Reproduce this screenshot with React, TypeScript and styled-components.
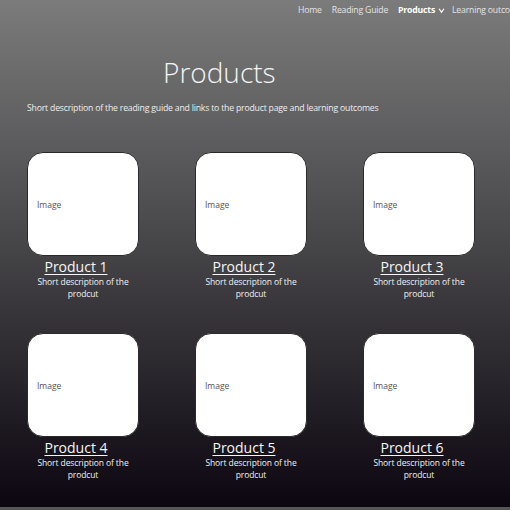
import React from 'react';
import styled, { createGlobalStyle } from 'styled-components';

const products = [1, 2, 3, 4, 5, 6].map((n) => ({
  id: n,
  name: `Product ${n}`,
  description: 'Short description of the prodcut',
}));

//
// MAIN COMPONENT
//
const App = () => {
  return (
    <>
      <GlobalStyle />
      <Page>
        <Header>
          <NavLink>Home</NavLink>
          <NavLink>Reading Guide</NavLink>
          <NavLink $active>
            Products
            <Chevron viewBox="0 0 10 10">
              <path d="M1.5 2.5 L5 7.5 L8.5 2.5" />
            </Chevron>
          </NavLink>
          <NavLink>Learning outcomes</NavLink>
        </Header>
        <Intro>
          <Title>Products</Title>
          <Lead>
            Short description of the reading guide and links to the product page and learning outcomes
          </Lead>
        </Intro>
        <ProductGrid>
          {products.map((product) => (
            <Card key={product.id}>
              <ImageBox>Image</ImageBox>
              <CardTitle>{product.name}</CardTitle>
              <CardText>{product.description}</CardText>
            </Card>
          ))}
        </ProductGrid>
      </Page>
      <Footer />
    </>
  );
};

export default App;

//
// STYLED COMPONENT
//
const GlobalStyle = createGlobalStyle`
  html, body {
    margin: 0;
    padding: 0;
    background: #4a4a4a;
    overflow: hidden;
  }
  body {
    font-family: "Open Sans", "Noto Sans", sans-serif;
    color: #f2f2f2;
  }
`;

const Page = styled.div`
  height: 507px;
  overflow: hidden;
  background: linear-gradient(180deg, #7b7b7b 0%, #444346 50%, #0c0610 100%);
`;

const Footer = styled.div`
  height: 3px;
  background: #555;
`;

const Header = styled.nav`
  display: flex;
  align-items: flex-start;
  gap: 10px;
  padding: 4px 0 0 298px;
  height: 18px;
  white-space: nowrap;
  overflow: hidden;
`;

const NavLink = styled.span<{ $active?: boolean }>`
  display: flex;
  align-items: center;
  gap: 3px;
  font-size: 8.7px;
  line-height: 13px;
  letter-spacing: -0.2px;
  font-weight: ${(p) => (p.$active ? 700 : 400)};
  color: ${(p) => (p.$active ? '#ffffff' : '#e4e4e4')};
`;

const Chevron = styled.svg`
  width: 7px;
  height: 7px;
  margin-right: -3px;
  fill: none;
  stroke: #ffffff;
  stroke-width: 1.8;
`;

const Intro = styled.section`
  padding: 30px 0 0 27px;
`;

const Title = styled.h1`
  margin: 0 0 0 136px;
  font-size: 28px;
  line-height: 40px;
  font-weight: 300;
  color: #f4f4f4;
`;

const Lead = styled.p`
  margin: 9px 0 0;
  font-size: 8.7px;
  letter-spacing: -0.2px;
  line-height: 14px;
  color: #ededed;
`;

const ProductGrid = styled.div`
  display: grid;
  grid-template-columns: repeat(3, 112px);
  column-gap: 56px;
  row-gap: 33px;
  padding: 37px 0 0 27px;
`;

const Card = styled.div`
  display: flex;
  flex-direction: column;
  align-items: center;
  text-align: center;
`;

const ImageBox = styled.div`
  box-sizing: border-box;
  width: 112px;
  height: 104px;
  display: flex;
  align-items: center;
  padding-left: 9px;
  background: #ffffff;
  border: 1px solid #2a2a2a;
  border-radius: 16px;
  font-size: 8.5px;
  color: #555;
`;

const CardTitle = styled.div`
  margin-top: 2px;
  padding-right: 14px;
  font-size: 14px;
  line-height: 18px;
  text-decoration: underline;
  text-underline-offset: 2px;
  color: #f6f6f6;
`;

const CardText = styled.div`
  width: 96px;
  font-size: 8.5px;
  letter-spacing: -0.1px;
  line-height: 12px;
  color: #f0f0f0;
`;
